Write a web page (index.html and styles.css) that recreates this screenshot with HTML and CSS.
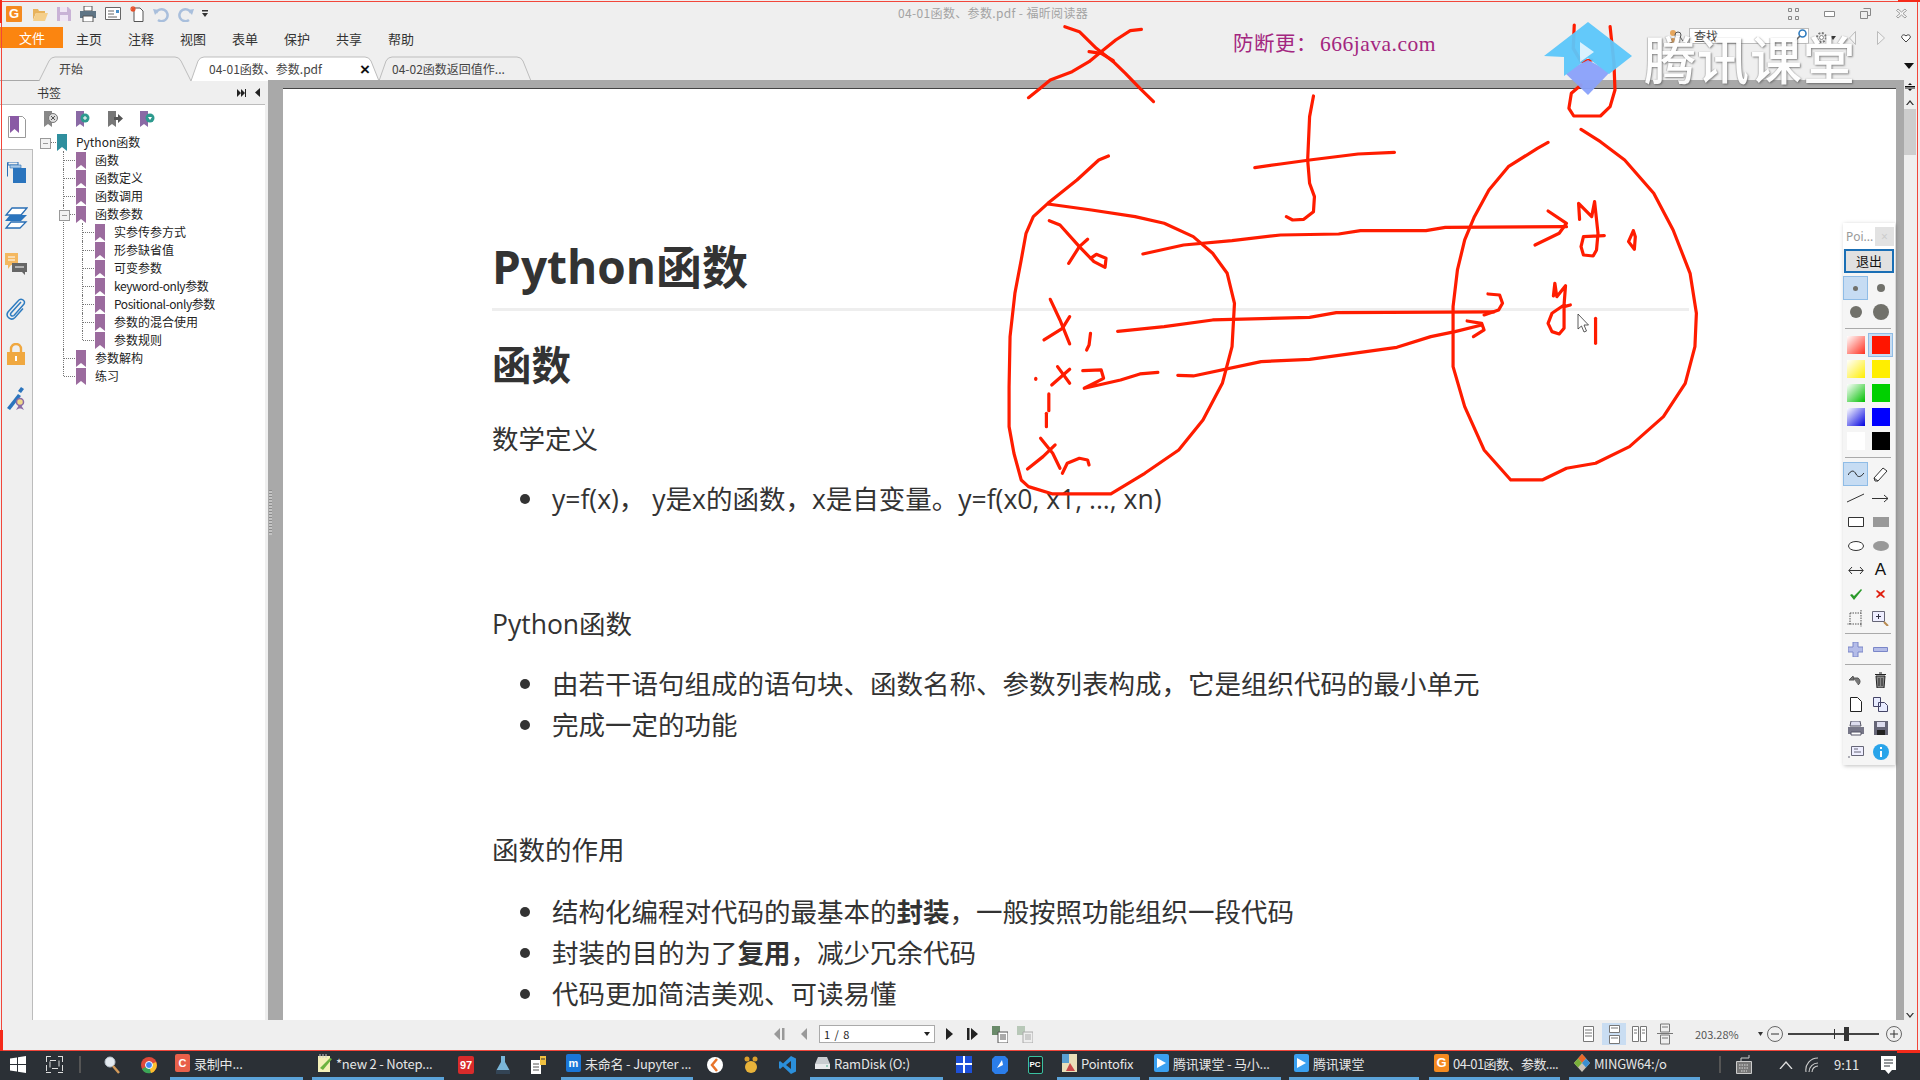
FILE: index.html
```html
<!DOCTYPE html>
<html lang="zh-CN">
<head>
<meta charset="utf-8">
<title>04-01函数、参数.pdf - 福昕阅读器</title>
<link rel="stylesheet" href="styles.css">
</head>
<body>
<svg class="defs" width="0" height="0" aria-hidden="true">
  <symbol id="bm" viewBox="0 0 10 17"><path d="M0 0H10V17L5 13 0 17Z"/></symbol>
</svg>

<div class="win">
  <header class="titlebar">
    <div class="qa">
      <span class="app-logo">G</span>
      <svg class="qi" width="16" height="14" viewBox="0 0 16 14"><path d="M1 2h5l1 2h6v2H4L1 13Z" fill="#e8b35c"/><path d="M4 6h12l-3 8H1Z" fill="#f5cf8a"/></svg>
      <svg class="qi" width="14" height="14" viewBox="0 0 14 14"><path d="M0 0h11l3 3v11H0Z" fill="#c9b3d6"/><path d="M3 0h7v5H3ZM3 8h8v6H3Z" fill="#efe6f4"/></svg>
      <svg class="qi" width="16" height="16" viewBox="0 0 16 16"><path d="M4 0h8v5H4Z" fill="#fff" stroke="#555"/><path d="M0 5h16v7H0Z" fill="#5f7585"/><path d="M3 10h10v6H3Z" fill="#fff" stroke="#555"/></svg>
      <svg class="qi" width="16" height="13" viewBox="0 0 16 13"><path d="M.5.5h15v12H.5Z" fill="#fff" stroke="#666"/><path d="M3 4h6M3 7h6M3 10h9" stroke="#666"/><path d="M11 3h3v3h-3Z" fill="#4a90c8"/></svg>
      <svg class="qi" width="14" height="16" viewBox="0 0 14 16"><path d="M4 2h6l3 3v10.500H4Z" fill="#fff" stroke="#555"/><path d="M3 0v6M0 3h6M1 1l4 4M5 1 1 5" stroke="#e8502a" stroke-width="1.200"/></svg>
      <svg class="qi" width="16" height="16" viewBox="0 0 16 16"><path d="M3 7a6 6 0 1 1 2 7" fill="none" stroke="#a9bfdc" stroke-width="2.500"/><path d="M0 3l6 1-4 5Z" fill="#a9bfdc"/></svg>
      <svg class="qi" width="16" height="16" viewBox="0 0 16 16"><path d="M13 7a6 6 0 1 0-2 7" fill="none" stroke="#a9bfdc" stroke-width="2.500"/><path d="M16 3l-6 1 4 5Z" fill="#a9bfdc"/></svg>
      <svg class="qi" width="6" height="7" viewBox="0 0 6 7"><path d="M0 0h6v1.500H0ZM0 3h6L3 7Z" fill="#333"/></svg>
    </div>
    <div class="doc-title">04-01函数、参数.pdf - 福昕阅读器</div>
    <div class="wc">
      <svg width="11" height="12" viewBox="0 0 11 12"><path d="M.5.500h3v3h-3ZM7.500.500h3v3h-3ZM.5 8.500h3v3h-3ZM7.500 8.500h3v3h-3Z" fill="none" stroke="#888"/></svg>
      <svg width="11" height="6" viewBox="0 0 11 6"><path d="M.5.500h10v5H.5Z" fill="#fff" stroke="#888"/></svg>
      <svg width="11" height="11" viewBox="0 0 11 11"><path d="M3.500.500h7v7h-3M.5 3.500h7v7h-7Z" fill="none" stroke="#888"/></svg>
      <svg width="11" height="11" viewBox="0 0 11 11"><path d="M2 1l3.500 3L9 1l1.500 1.500L7 5.500l3.500 3L9 10 5.500 7 2 10 .5 8.500 4 5.500.5 2.500Z" fill="#f5f5f5" stroke="#888" stroke-width=".8"/></svg>
    </div>
  </header>

  <nav class="menubar">
    <div class="file-btn">文件</div>
    <div class="menu-items">
      <span class="menu-item">主页</span><span class="menu-item">注释</span><span class="menu-item">视图</span><span class="menu-item">表单</span><span class="menu-item">保护</span><span class="menu-item">共享</span><span class="menu-item">帮助</span>
    </div>
    <div class="ribbon-right">
      <svg class="find-ic" width="16" height="15" viewBox="0 0 16 15"><circle cx="5" cy="4" r="3" fill="#e6a65c"/><path d="M1 15c0-4 2-6 4-6s3 1 4 3" fill="#d99a55"/><circle cx="10" cy="6" r="3" fill="none" stroke="#555"/><path d="M12 8l3 4" stroke="#555"/></svg>
      <div class="search"><span>查找</span><svg width="13" height="13" viewBox="0 0 13 13"><circle cx="8.500" cy="4.500" r="3.500" fill="none" stroke="#2f7cc0" stroke-width="1.600"/><path d="M6 7 1 12" stroke="#666" stroke-width="1.600"/></svg></div>
      <svg class="gear" width="13" height="13" viewBox="0 0 13 13"><circle cx="6.500" cy="6.500" r="4.500" fill="#eee" stroke="#777" stroke-width="2" stroke-dasharray="2 1.500"/><circle cx="6.500" cy="6.500" r="2" fill="#fff" stroke="#888"/></svg>
      <svg class="caret" width="6" height="4" viewBox="0 0 6 4"><path d="M0 0h6L3 4Z" fill="#333"/></svg>
      <svg class="nav-l" width="7" height="14" viewBox="0 0 7 14"><path d="M6.500.5v13L.5 7Z" fill="#f4f4f4" stroke="#bbb"/></svg>
      <svg class="nav-r" width="8" height="14" viewBox="0 0 8 14"><path d="M.5.5v13l7-6.500Z" fill="#f4f4f4" stroke="#bbb"/></svg>
      <svg class="heart" width="10" height="9" viewBox="0 0 10 9"><path d="M5 8 1 4C-.5 1.500 3 -.5 5 2c2-2.500 5.500-.5 4 2Z" fill="#fff" stroke="#444"/></svg>
    </div>
  </nav>

  <div class="tabs">
    <div class="tab tab-start">
      <svg class="tab-shape" width="155" height="25" viewBox="0 0 155 25"><path d="M1 25 11 5Q13 1 17 1H137Q141 1 143 5L153 25" fill="#efefef" stroke="#bdbdbd"/></svg>
      <span class="tab-label">开始</span>
    </div>
    <div class="tab tab-active">
      <svg class="tab-shape" width="191" height="25" viewBox="0 0 191 25"><path d="M1 25 8 5Q10 1 14 1H175Q179 1 181 5L189 25" fill="#fff" stroke="#bdbdbd"/></svg>
      <span class="tab-label">04-01函数、参数.pdf</span><span class="tab-x">×</span>
    </div>
    <div class="tab tab-next">
      <svg class="tab-shape" width="155" height="25" viewBox="0 0 155 25"><path d="M1 25 8 5Q10 1 14 1H139Q143 1 145 5L153 25" fill="#efefef" stroke="#bdbdbd"/></svg>
      <span class="tab-label">04-02函数返回值作...</span>
    </div>
    <svg class="ribbon-toggle" width="10" height="6" viewBox="0 0 10 6"><path d="M0 0h10L5 6Z" fill="#111"/></svg>
  </div>

  <main class="main">
    <aside class="side">
      <div class="side-head">
        <span class="side-title">书签</span>
        <svg width="10" height="8" viewBox="0 0 10 8"><path d="M0 0 4 4 0 8ZM4 0 8 4 4 8ZM8 0h1v8H8Z" fill="#222"/></svg>
        <svg class="side-collapse" width="6" height="9" viewBox="0 0 6 9"><path d="M5 0v9L0 4.500Z" fill="#222"/></svg>
      </div>
      <div class="side-body">
        <div class="rail">
          <div class="rail-cell active"><svg width="18" height="22" viewBox="0 0 18 22"><path d="M.5.5h14l3 3v18H.5Z" fill="#fff" stroke="#999"/><path d="M2 0h9v17l-4.500-4L2 17Z" fill="#8a5aa5"/></svg></div>
          <div class="rail-cell"><svg width="19" height="21" viewBox="0 0 19 21"><path d="M1 0h10v3H1ZM.5.5v14" stroke="#2a6fb5" fill="none"/><path d="M3 3h11v3H3Z" fill="#a9c9e8" stroke="#2a6fb5" stroke-width=".6"/><path d="M6 6h13v15H6Z" fill="#2a74bd"/></svg></div>
          <div class="rail-cell"><svg width="24" height="22" viewBox="0 0 24 22"><path d="M8 1h15l-6 7H2Z" fill="#fff" stroke="#2a6fb5" stroke-width="1.300"/><path d="M6 8h17l-6 6H1Z" fill="#2a74bd"/><path d="M7 15h15l-6 6H2Z" fill="#fff" stroke="#2a6fb5" stroke-width="1.300"/></svg></div>
          <div class="rail-cell"><svg width="22" height="22" viewBox="0 0 22 22"><path d="M0 0h13v12H6l-3 4v-4H0Z" fill="#f4b860"/><path d="M3 4h7M3 7h7" stroke="#fff"/><path d="M7 10h15v9h-2v3l-3-3H7Z" fill="#666"/><path d="M10 14h9" stroke="#fff"/></svg></div>
          <div class="rail-cell"><svg width="20" height="22" viewBox="0 0 20 22"><path d="M15 4 5 15c-1.500 2 1 4 3 2.500L18 6c2-3.500-3-6.500-6-3L2 14c-3 4.500 3 9.500 7 5.500l8-9" fill="none" stroke="#2f7cc0" stroke-width="1.500"/></svg></div>
          <div class="rail-cell"><svg width="18" height="22" viewBox="0 0 18 22"><path d="M4 10V6a5 5 0 0 1 10 0v4" fill="none" stroke="#f0a840" stroke-width="2.400"/><path d="M0 9h18v13H0Z" fill="#f0a840"/><path d="M8 13h2v5H8Z" fill="#fff"/></svg></div>
          <div class="rail-cell"><svg width="20" height="24" viewBox="0 0 20 24"><path d="M1 21 12 7l3 2L4 23Z" fill="#2a74bd"/><path d="M12 4 15 0l3 2-3 4Z" fill="#2a74bd"/><circle cx="14" cy="15" r="3.500" fill="#f0d78a" stroke="#8a6aa5" stroke-width="1.500"/><path d="M10 23l3-5h2l3 5-3-1.500h-2Z" fill="#8a6aa5"/></svg></div>
        </div>
        <div class="tree-pane">
          <div class="bm-tools">
            <svg width="15" height="16" viewBox="0 0 15 16"><path d="M0 0h8v16l-4-3-4 3Z" fill="#888"/><circle cx="9" cy="7" r="4.500" fill="#ddd" stroke="#777"/><path d="M7 5l4 4M11 5 7 9" stroke="#555"/></svg>
            <svg width="15" height="16" viewBox="0 0 15 16"><path d="M0 0h8v16l-4-3-4 3Z" fill="#8a6aa5"/><circle cx="9" cy="7" r="4.500" fill="#2d9a8e"/><path d="M7 7h4M9 5v4" stroke="#fff"/></svg>
            <svg width="15" height="16" viewBox="0 0 15 16"><path d="M0 0h8v16l-4-3-4 3Z" fill="#777"/><path d="M6 6h4V3l5 4.500-5 4.500V9H6Z" fill="#555"/></svg>
            <svg width="16" height="16" viewBox="0 0 16 16"><path d="M0 0h8v16l-4-3-4 3Z" fill="#8a6aa5"/><circle cx="10" cy="7" r="4.500" fill="#2d9a8e"/><path d="M8 6h4l-2 3Z" fill="#fff"/></svg>
          </div>
          <ul class="tree">
            <li class="root has-kids"><div class="node"><svg class="bm teal" width="10" height="17"><use href="#bm"/></svg>Python函数</div>
              <ul>
                <li><div class="node"><svg class="bm" width="10" height="17"><use href="#bm"/></svg>函数</div></li>
                <li><div class="node"><svg class="bm" width="10" height="17"><use href="#bm"/></svg>函数定义</div></li>
                <li><div class="node"><svg class="bm" width="10" height="17"><use href="#bm"/></svg>函数调用</div></li>
                <li class="has-kids"><div class="node"><svg class="bm" width="10" height="17"><use href="#bm"/></svg>函数参数</div>
                  <ul>
                    <li><div class="node"><svg class="bm" width="10" height="17"><use href="#bm"/></svg>实参传参方式</div></li>
                    <li><div class="node"><svg class="bm" width="10" height="17"><use href="#bm"/></svg>形参缺省值</div></li>
                    <li><div class="node"><svg class="bm" width="10" height="17"><use href="#bm"/></svg>可变参数</div></li>
                    <li><div class="node lat"><svg class="bm" width="10" height="17"><use href="#bm"/></svg><span>keyword-only参数</span></div></li>
                    <li><div class="node lat"><svg class="bm" width="10" height="17"><use href="#bm"/></svg><span>Positional-only参数</span></div></li>
                    <li><div class="node"><svg class="bm" width="10" height="17"><use href="#bm"/></svg>参数的混合使用</div></li>
                    <li><div class="node"><svg class="bm" width="10" height="17"><use href="#bm"/></svg>参数规则</div></li>
                  </ul>
                </li>
                <li><div class="node"><svg class="bm" width="10" height="17"><use href="#bm"/></svg>参数解构</div></li>
                <li><div class="node"><svg class="bm" width="10" height="17"><use href="#bm"/></svg>练习</div></li>
              </ul>
            </li>
          </ul>
        </div>
      </div>
    </aside>
    <div class="workspace">
      <i class="grip"></i>
      <article class="doc">
        <h1>Python函数</h1>
        <h2>函数</h2>
        <p class="p1">数学定义</p>
        <ul class="l1"><li>y=f(x)， y是x的函数，x是自变量。y=f(x0, x1, ..., xn)</li></ul>
        <p class="p2">Python函数</p>
        <ul class="l2"><li>由若干语句组成的语句块、函数名称、参数列表构成，它是组织代码的最小单元</li><li>完成一定的功能</li></ul>
        <p class="p2">函数的作用</p>
        <ul class="l3"><li>结构化编程对代码的最基本的<b>封装</b>，一般按照功能组织一段代码</li><li>封装的目的为了<b>复用</b>，减少冗余代码</li><li>代码更加简洁美观、可读易懂</li></ul>
      </article>
      <div class="vscroll">
        <svg class="split-ic" width="10" height="8" viewBox="0 0 10 8"><path d="M0 3.500h10M0 5h10" stroke="#111"/><path d="M3 2h4L5 0ZM3 6h4L5 8Z" fill="#111"/></svg>
        <svg class="up-ic" width="8" height="5" viewBox="0 0 8 5"><path d="M0 5 4 0l4 5-1.500 0L4 2 1.500 5Z" fill="#333"/></svg>
        <div class="thumb"></div>
        <svg class="down-ic" width="8" height="5" viewBox="0 0 8 5"><path d="M0 0l4 5 4-5H6.500L4 3 1.500 0Z" fill="#333"/></svg>
      </div>
    </div>
  </main>

  <footer class="status">
    <div class="pager">
      <svg width="11" height="12" viewBox="0 0 11 12"><path d="M6 0v12L0 6ZM8 0h2.500v12H8Z" fill="#999"/></svg>
      <svg class="gap-prev" width="6" height="12" viewBox="0 0 6 12"><path d="M6 0v12L0 6Z" fill="#999"/></svg>
      <div class="page-box"><span>1 / 8</span><svg width="6" height="4" viewBox="0 0 6 4"><path d="M0 0h6L3 4Z" fill="#222"/></svg></div>
      <svg class="gap-next" width="7" height="12" viewBox="0 0 7 12"><path d="M0 0v12l7-6Z" fill="#222"/></svg>
      <svg class="gap-last" width="11" height="12" viewBox="0 0 11 12"><path d="M0 0h2.500v12H0ZM4 0v12l7-6Z" fill="#222"/></svg>
      <svg class="gap-c1" width="16" height="17" viewBox="0 0 16 17"><path d="M0 0h8v9H0Z" fill="#6a8a6a"/><path d="M6 6h10v11H6Z" fill="#fff" stroke="#555"/><path d="M8 9h6M8 11h6M8 13h6" stroke="#555"/></svg>
      <svg class="gap-c2" width="16" height="17" viewBox="0 0 16 17"><path d="M0 0h8v9H0Z" fill="#b8c8b8"/><path d="M6 6h10v11H6Z" fill="#eee" stroke="#aaa"/><path d="M8 9h6M8 11h6M8 13h6" stroke="#aaa"/></svg>
    </div>
    <div class="views">
      <svg width="11" height="16" viewBox="0 0 11 16"><path d="M.5.5h10v15H.5ZM2 4h7M2 7h7M2 10h7" fill="#fff" stroke="#777"/></svg>
      <span class="view-sel"><svg width="11" height="22" viewBox="0 0 11 22"><path d="M.5 2.500h10v7H.5ZM.5 12.500h10v8H.5ZM2 5h7M2 15h7" fill="#fff" stroke="#777"/></svg></span>
      <svg class="v3" width="15" height="16" viewBox="0 0 15 16"><path d="M.5.5h6v15h-6ZM8.500.5h6v15h-6ZM2 4h3M2 7h3M10 4h3M10 7h3" fill="#fff" stroke="#777"/></svg>
      <svg class="v4" width="16" height="22" viewBox="0 0 16 22"><path d="M3.500 1h9v8h-9ZM0 10.500h16M3.500 12h9v9h-9ZM5 4h6M5 15h6" fill="none" stroke="#777"/></svg>
      <span class="zoom-val">203.28%</span>
      <svg class="zoom-caret" width="5" height="4" viewBox="0 0 5 4"><path d="M0 0h5L2.500 4Z" fill="#333"/></svg>
      <svg class="zoom-btn" width="16" height="16" viewBox="0 0 16 16"><circle cx="8" cy="8" r="7.500" fill="none" stroke="#666"/><path d="M4 8h8" stroke="#333"/></svg>
      <div class="slider"><i class="tick"></i><i class="knob"></i></div>
      <svg class="zoom-btn2" width="16" height="16" viewBox="0 0 16 16"><circle cx="8" cy="8" r="7.500" fill="none" stroke="#666"/><path d="M4 8h8M8 4v8" stroke="#333"/></svg>
    </div>
  </footer>
</div>

<div class="taskbar">
  <div class="ti w36"><svg width="16" height="17" viewBox="0 0 16 17"><path d="M0 2.500 7 1.500v6.500H0ZM8 1.300 16 0v8H8ZM0 9h7v6.500L0 14.500ZM8 9h8v8L8 15.700Z" fill="#fff"/></svg></div>
  <div class="ti w37"><svg width="17" height="17" viewBox="0 0 17 17"><path d="M0 .5h5M12 .5h5M4 4.500h9v8H4ZM0 16.500h5M12 16.500h5M16.500 0v17M.5 0v17" fill="none" stroke="#ddd" stroke-dasharray="6 3"/></svg></div>
  <div class="ti w14"><i class="tsep"></i></div>
  <div class="ti w50"><svg width="16" height="18" viewBox="0 0 16 18"><circle cx="6" cy="6" r="5" fill="#e4eaf0" stroke="#b9c2cc"/><path d="M9 10l6 7" stroke="#d39a5a" stroke-width="2.500"/></svg></div>
  <div class="ti w23"><svg width="16" height="18" viewBox="0 0 16 18"><circle cx="8" cy="9" r="8" fill="#de4a3a"/><path d="M8 9 1 13A8 8 0 0 0 10 17Z" fill="#3aa757"/><path d="M8 9l7-3a8 8 0 0 1-5 11Z" fill="#fbc02d"/><circle cx="8" cy="9" r="3.500" fill="#4285f4" stroke="#fff"/></svg></div>

  <div class="tapp m10 w133"><span class="tlogo t-rec">C</span><span class="tlabel">录制中...</span></div>
  <div class="tapp m9 w132"><svg width="15" height="18" viewBox="0 0 15 18"><path d="M1 2h12v16H1Z" fill="#f4f0b8"/><path d="M3 0v4M6 0v4M9 0v4" stroke="#ccc"/><path d="M3 14 13 4l2 1L6 16Z" fill="#6db33f"/></svg><span class="tlabel">*new 2 - Notep...</span></div>
  <div class="ti m4 w36"><span class="tlogo t-97">97</span></div>
  <div class="ti w37"><svg width="16" height="18" viewBox="0 0 16 18"><path d="M6 0h4v6l5 9v3H1v-3l5-9Z" fill="#7ab6d9"/><path d="M1 14h14v4H1Z" fill="#345"/></svg></div>
  <div class="ti w34"><svg width="16" height="18" viewBox="0 0 16 18"><path d="M1 4h10v14H1Z" fill="#fff"/><path d="M3 8h6M3 11h6M3 14h6" stroke="#555"/><path d="M10 0h6v9h-6Z" fill="#f0c040"/><path d="M11 3h4" stroke="#333"/></svg></div>
  <div class="tapp m6 w132"><span class="tlogo t-jup">m</span><span class="tlabel">未命名 - Jupyter ...</span></div>
  <div class="ti m4 w36"><svg width="16" height="18" viewBox="0 0 16 18"><circle cx="8" cy="9" r="8" fill="#fff"/><path d="M10 3 5 9l5 6" fill="none" stroke="#e8742a" stroke-width="2.500"/></svg></div>
  <div class="ti w36"><svg width="16" height="17" viewBox="0 0 16 17"><circle cx="8" cy="11" r="6" fill="#e8b33a"/><circle cx="4" cy="3" r="2.500" fill="#d9a02e"/><circle cx="12" cy="3" r="2.500" fill="#d9a02e"/></svg></div>
  <div class="ti w36"><svg width="17" height="18" viewBox="0 0 17 18"><path d="M12 0l5 2.500v13L12 18 4 10.500 1 13l-1-1v-6l1-1 3 2.500Z" fill="#2b8fdb"/><path d="M12 5v8L7 9Z" fill="#2b3036"/></svg></div>
  <div class="tapp m5 w133"><svg width="15" height="12" viewBox="0 0 15 12"><path d="M3 0h9l3 7H0Z" fill="#c8ccd0"/><path d="M0 7h15v5H0Z" fill="#e8eaec"/><path d="M11 9h2" stroke="#4a8"/></svg><span class="tlabel">RamDisk (O:)</span></div>
  <div class="ti m3 w36"><svg width="16" height="17" viewBox="0 0 16 17"><path d="M0 0h16v17H0Z" fill="#1e50d8"/><path d="M7 0h2v17H7ZM0 7h16v2H0Z" fill="#fff"/></svg></div>
  <div class="ti w36"><svg width="16" height="18" viewBox="0 0 16 18"><path d="M3 0h10l3 3v12l-3 3H3l-3-3V3Z" fill="#2b7de9"/><path d="M5 12 10 4l1 5Z" fill="#fff"/></svg></div>
  <div class="ti w34"><span class="tlogo t-pc">PC</span></div>
  <div class="tapp m5 w83"><svg width="15" height="18" viewBox="0 0 15 18"><path d="M0 0h15v18H0Z" fill="#e9dfb8"/><path d="M0 0h7v9H0Z" fill="#5aa0d0"/><path d="M8 9l5 8H4Z" fill="#c94a4a"/></svg><span class="tlabel">Pointofix</span></div>
  <div class="tapp m9 w132"><span class="tlogo t-ke"><svg width="9" height="10" viewBox="0 0 9 10"><path d="M0 0l9 5-9 5Z" fill="#fff"/></svg></span><span class="tlabel">腾讯课堂 - 马小...</span></div>
  <div class="tapp m8 w130"><span class="tlogo t-ke"><svg width="9" height="10" viewBox="0 0 9 10"><path d="M0 0l9 5-9 5Z" fill="#fff"/></svg></span><span class="tlabel">腾讯课堂</span></div>
  <div class="tapp m10 w131"><span class="tlogo t-fox">G</span><span class="tlabel tight">04-01函数、参数....</span></div>
  <div class="tapp m9 w131"><svg width="16" height="18" viewBox="0 0 16 18"><path d="M8 0l8 9-8 9-8-9Z" fill="#c9c2b6"/><path d="M8 0l4 4.500-4 4.500-4-4.500Z" fill="#e8682a"/><path d="M12 4.500l4 4.500-4 4.500-4-4.500Z" fill="#3a8fd0"/><path d="M4 4.500l4 4.500-4 4.500-4-4.500Z" fill="#7ab03a"/></svg><span class="tlabel">MINGW64:/o</span></div>

  <div class="tray">
    <i class="tsep"></i>
    <svg class="tr-kb" width="16" height="19" viewBox="0 0 16 19"><path d="M.5 6.500h15v12H.5Z" fill="#777" stroke="#ccc"/><path d="M3 10h10M3 13h10M5 16h6" stroke="#ddd" stroke-dasharray="1.500 1"/><path d="M5 6V3h8V0" fill="none" stroke="#ccc"/></svg>
    <svg class="tr-up" width="14" height="8" viewBox="0 0 14 8"><path d="M1 8l6-7 6 7" fill="none" stroke="#ddd" stroke-width="1.300"/></svg>
    <svg class="tr-wifi" width="13" height="15" viewBox="0 0 13 15"><path d="M1 15A12 12 0 0 1 13 1M4 15a9 9 0 0 1 9-9M7 15a6 6 0 0 1 6-6" fill="none" stroke="#ccc" stroke-width="1.100"/></svg>
    <span class="clock">9:11</span>
    <svg class="tr-note" width="15" height="18" viewBox="0 0 15 18"><path d="M0 0h15v14h-4l-3.500 4L4 14H0Z" fill="#fff"/><path d="M3 4h9M3 7h9M3 10h6" stroke="#2b3036"/></svg>
  </div>
</div>

<svg class="ink" width="1920" height="1080" viewBox="0 0 1920 1080" aria-hidden="true">
  <g transform="translate(980,20) scale(.4847,.3333)" fill="none" stroke="#ff1c00" stroke-width="3.200" stroke-linejoin="round" stroke-linecap="round">
    <path vector-effect="non-scaling-stroke" d="M175 20 205 35 240 85 275 125 300 160 330 205 358 245"/>
    <path vector-effect="non-scaling-stroke" d="M333 28 310 32 280 60 250 95 225 125 190 155 145 180 120 210 100 233"/>
    <path vector-effect="non-scaling-stroke" d="M225 95 250 100 275 122"/>
    <path vector-effect="non-scaling-stroke" d="M688 228 680 290 676 420 680 490 690 530 688 575 668 598 645 600 632 590"/>
    <path vector-effect="non-scaling-stroke" d="M567 443 620 432 680 420 780 402 855 397"/>
    <path vector-effect="non-scaling-stroke" d="M265 408 245 420 200 480 140 550 110 590 95 640 85 720 72 820 62 950 60 1100 60 1220 70 1300 85 1380 100 1400 150 1422 270 1422 340 1360 410 1290 460 1200 500 1090 520 980 525 850 510 760 480 700 440 650 380 610 320 590 230 570 140 552"/>
    <path vector-effect="non-scaling-stroke" d="M1172 367 1150 385 1090 440 1050 510 1020 590 1000 660 985 750 976 860 976 1040 1000 1160 1040 1290 1095 1380 1160 1380 1210 1345 1270 1330 1340 1280 1410 1190 1455 1090 1475 980 1478 880 1465 760 1430 630 1390 520 1330 420 1280 365 1240 328"/>
    <path vector-effect="non-scaling-stroke" d="M336 702 420 675 520 662 620 645 740 642 785 632 920 632 960 622 1210 620"/>
    <path vector-effect="non-scaling-stroke" d="M1172 573 1210 610 1195 640 1145 675"/>
    <path vector-effect="non-scaling-stroke" d="M1237 598 1235 550 1262 590 1268 545 1275 640 1272 690 1265 708 1245 705 1240 680 1245 650 1288 647"/>
    <path vector-effect="non-scaling-stroke" d="M1348 632 1338 665 1350 688 1352 650Z"/>
    <path vector-effect="non-scaling-stroke" d="M284 934 380 920 480 900 680 892 735 878 1060 876"/>
    <path vector-effect="non-scaling-stroke" d="M1048 822 1072 825 1078 850 1070 870 1040 885"/>
    <path vector-effect="non-scaling-stroke" d="M1183 828 1186 790 1190 830 1208 797 1205 855 1180 880 1172 910 1180 935 1195 942 1205 925 1205 860 1218 855"/>
    <path vector-effect="non-scaling-stroke" d="M1270 895V970"/>
    <path vector-effect="non-scaling-stroke" d="M408 1066 440 1068 580 1025 680 1018 860 982 930 950 980 935 1035 915"/>
    <path vector-effect="non-scaling-stroke" d="M1005 903 1035 910 1040 930 1018 950"/>
    <path vector-effect="non-scaling-stroke" d="M143 602 165 615 205 680 235 725 258 742 260 715 240 703 228 715"/>
    <path vector-effect="non-scaling-stroke" d="M222 658 205 680 183 730"/>
    <path vector-effect="non-scaling-stroke" d="M145 838 165 900 185 972"/>
    <path vector-effect="non-scaling-stroke" d="M185 890 170 925 132 960"/>
    <path vector-effect="non-scaling-stroke" d="M228 940 225 975 220 990"/>
    <path vector-effect="non-scaling-stroke" d="M160 1040 185 1090"/>
    <path vector-effect="non-scaling-stroke" d="M185 1048 148 1095"/>
    <path vector-effect="non-scaling-stroke" d="M212 1052 250 1050 255 1075 215 1105 290 1080 330 1062 367 1057"/>
    <path vector-effect="non-scaling-stroke" d="M115 1075V1078"/>
    <path vector-effect="non-scaling-stroke" d="M142 1122V1172"/>
    <path vector-effect="non-scaling-stroke" d="M137 1180V1220"/>
    <path vector-effect="non-scaling-stroke" d="M125 1255 150 1300 165 1345"/>
    <path vector-effect="non-scaling-stroke" d="M155 1275 130 1310 98 1347"/>
    <path vector-effect="non-scaling-stroke" d="M170 1360 180 1330 205 1315 222 1320 225 1335"/>
    <path vector-effect="non-scaling-stroke" d="M1226 15 1224 85 1240 125 1262 120"/>
    <path vector-effect="non-scaling-stroke" d="M1300 20 1308 130 1310 210 1300 260 1280 288 1225 288 1215 265 1220 220 1240 195"/>
  </g>
  <path d="M1578 314v15l3.500-3 2.500 6 2.500-1-2.500-6h4.500Z" fill="#fff" stroke="#333" stroke-width=".8"/>
</svg>

<div class="mark">防断更：<span>666java.com</span></div>
<div class="ke-mark">
  <svg width="90" height="74" viewBox="0 0 90 74"><path d="M20 50 44 38 66 50 44 73Z" fill="#8aa2fb"/><path d="M44 0 88 34 65 52 44 36 20 54V35L0 34Z" fill="#5cc7fb"/><path d="M36 20v20l14-10Z" fill="#d8f2ff"/></svg>
  <span>腾讯课堂</span>
</div>

<aside class="pf">
  <div class="pf-head"><span>Poi...</span><i>×</i></div>
  <div class="pf-exit">退出</div>
  <div class="pf-grid">
    <span class="pc sel"><i class="dot d1"></i></span><span class="pc"><i class="dot d2"></i></span>
    <span class="pc"><i class="dot d3"></i></span><span class="pc"><i class="dot d4"></i></span>
    <hr>
    <span class="pc"><i class="sw red-g"></i></span><span class="pc sel"><i class="sw red"></i></span>
    <span class="pc"><i class="sw yel-g"></i></span><span class="pc"><i class="sw yel"></i></span>
    <span class="pc"><i class="sw grn-g"></i></span><span class="pc"><i class="sw grn"></i></span>
    <span class="pc"><i class="sw blu-g"></i></span><span class="pc"><i class="sw blu"></i></span>
    <span class="pc"><i class="sw wht"></i></span><span class="pc"><i class="sw blk"></i></span>
    <hr>
    <span class="pc sel"><svg width="16" height="8" viewBox="0 0 16 8"><path d="M0 5C3 0 6 0 8 4s5 3 8-1" fill="none" stroke="#222"/></svg></span>
    <span class="pc"><svg width="15" height="15" viewBox="0 0 15 15"><path d="M1 11 10 1l4 3-9 10H2Z" fill="#fff" stroke="#333"/><path d="M1 11l4 3" stroke="#333"/></svg></span>
    <span class="pc"><svg width="17" height="10" viewBox="0 0 17 10"><path d="M0 9 17 1" stroke="#333"/></svg></span>
    <span class="pc"><svg width="17" height="9" viewBox="0 0 17 9"><path d="M0 4.500h16M12 1l4 3.500L12 8" fill="none" stroke="#333"/></svg></span>
    <span class="pc"><svg width="16" height="10" viewBox="0 0 16 10"><path d="M.5.500h15v9H.5Z" fill="#fff" stroke="#333"/></svg></span>
    <span class="pc"><svg width="16" height="10" viewBox="0 0 16 10"><path d="M0 0h16v10H0Z" fill="#999"/></svg></span>
    <span class="pc"><svg width="16" height="10" viewBox="0 0 16 10"><ellipse cx="8" cy="5" rx="7.500" ry="4.500" fill="#fff" stroke="#333"/></svg></span>
    <span class="pc"><svg width="16" height="10" viewBox="0 0 16 10"><ellipse cx="8" cy="5" rx="8" ry="5" fill="#999"/></svg></span>
    <span class="pc"><svg width="16" height="9" viewBox="0 0 16 9"><path d="M1 4.500h14M4 1 .8 4.500 4 8M12 1l3.200 3.500L12 8" fill="none" stroke="#333"/></svg></span>
    <span class="pc pf-a">A</span>
    <span class="pc"><svg width="12" height="11" viewBox="0 0 12 11"><path d="M0 6l4 5 8-10-1-1-7 7-2-2Z" fill="#2a9a2a"/></svg></span>
    <span class="pc"><svg width="9" height="8" viewBox="0 0 9 8"><path d="M0 1l1-1 3.500 2.500L8 0l1 1-3 3 3 3-1 1-3.500-2.500L1 8 0 7l3-3Z" fill="#e02010"/></svg></span>
    <span class="pc"><svg width="17" height="17" viewBox="0 0 17 17"><path d="M3 14H0M3 14h11M14 14v3M14 14V0M3 3v11M3 3h11" fill="none" stroke="#555" stroke-dasharray="1.500 1"/></svg></span>
    <span class="pc"><svg width="17" height="15" viewBox="0 0 17 15"><path d="M.5.500h12v10H.5Z" fill="#eef" stroke="#667"/><path d="M4 5.500h5M6.500 3v5" stroke="#334"/><path d="M12 11l4 4" stroke="#b88a50" stroke-width="2"/></svg></span>
    <hr class="hr-tight">
    <span class="pc"><svg width="15" height="15" viewBox="0 0 15 15"><path d="M5 0h5v5h5v5h-5v5H5v-5H0V5h5Z" fill="#b4bce8" stroke="#7a86c8"/></svg></span>
    <span class="pc"><svg width="15" height="5" viewBox="0 0 15 5"><path d="M.5.500h14v4H.5Z" fill="#b4bce8" stroke="#7a86c8"/></svg></span>
    <hr class="hr-tight">
    <span class="pc"><svg width="14" height="10" viewBox="0 0 14 10"><path d="M5 5H0l4-4 1 4ZM4 3h5a4 4 0 0 1 0 7" fill="#777" stroke="#555"/></svg></span>
    <span class="pc"><svg width="13" height="16" viewBox="0 0 13 16"><path d="M2 4h9l-1 12H3Z" fill="#888" stroke="#222"/><path d="M1 2.500h11M5 1h3M5 6v8M8 6v8" stroke="#222"/></svg></span>
    <span class="pc"><svg width="12" height="15" viewBox="0 0 12 15"><path d="M.5.500h7l4 4v10H.5Z" fill="#fff" stroke="#222"/></svg></span>
    <span class="pc"><svg width="15" height="15" viewBox="0 0 15 15"><path d="M.5.500h7v9h-7ZM5.500 5.500h6l3 3v6h-9Z" fill="#e8ecff" stroke="#446"/></svg></span>
    <span class="pc"><svg width="16" height="15" viewBox="0 0 16 15"><path d="M3 0h9l1 5H2Z" fill="#dde" stroke="#556"/><path d="M0 6h16v7H0Z" fill="#778" /><path d="M3 11h10v3H3Z" fill="#fff" stroke="#556"/></svg></span>
    <span class="pc"><svg width="14" height="14" viewBox="0 0 14 14"><path d="M0 0h14v14H0Z" fill="#667"/><path d="M3 1h8v5H3Z" fill="#dde"/><path d="M3 9h8v5H3Z" fill="#222"/></svg></span>
    <span class="pc"><svg width="16" height="12" viewBox="0 0 16 12"><path d="M3.500.5h12v9h-12Z" fill="#eef" stroke="#667"/><path d="M6 3h4M6 6h7M0 11h2" stroke="#667"/></svg></span>
    <span class="pc"><svg width="16" height="16" viewBox="0 0 16 16"><circle cx="8" cy="8" r="8" fill="#29a4ea"/><path d="M7 7h2v6H7ZM7 3h2v2H7Z" fill="#fff"/></svg></span>
  </div>
</aside>

<div class="frame"></div>
<div class="cn cn-tl"></div>
<div class="cn cn-tr"></div>
<div class="cn cn-bl"></div>
<div class="cn cn-br"></div>
</body>
</html>
```

FILE: styles.css
```css
* { box-sizing: border-box; }
html, body { margin: 0; padding: 0; width: 1920px; height: 1080px; overflow: hidden; }
body {
  font-family: "Noto Sans CJK SC", "Noto Sans", sans-serif;
  background: #efefef;
  position: relative;
  color: #222;
}
i { font-style: normal; display: block; }
svg { display: block; flex: none; }
.defs { position: absolute; }

/* window */
.win { height: 1051px; display: flex; flex-direction: column; background: #efefef; }
.titlebar { height: 27px; flex: none; display: flex; align-items: center; position: relative; }
.qa { display: flex; align-items: center; padding-left: 6px; }
.app-logo {
  width: 16px; height: 16px; background: #f58a1f; color: #fff; font: 700 13px/16px "Liberation Sans", sans-serif;
  text-align: center; border-radius: 1px;
}
.qi { margin-left: 9px; }
.qa .qi:nth-child(2) { margin-left: 10px; }
.qa .qi:nth-child(9) { margin-left: 8px; }
.doc-title { margin-left: 690px; margin-bottom: 3px; font-size: 12px; letter-spacing: .35px; color: #a3a3a3; white-space: nowrap; }
.wc { margin-left: auto; display: flex; align-items: center; gap: 25px; padding-right: 13px; }

.menubar { height: 21px; flex: none; display: flex; }
.file-btn {
  width: 63px; background: #fb8510; color: #fff; font-size: 13px; line-height: 22px; padding-left: 19px;
}
.menu-items { display: flex; padding-left: 13px; font-size: 13px; line-height: 24px; color: #333; }
.menu-item { width: 52px; }
.ribbon-right { margin-left: auto; display: flex; align-items: flex-start; padding-right: 9px; position: relative; }
.find-ic { margin: 2px 5px 0 0; }
.search {
  width: 120px; height: 16px; margin-top: 1px; background: #fff; border: 1px solid #bbb; font-size: 12px; line-height: 14px;
  display: flex; justify-content: space-between; padding: 0 1px 0 4px; color: #444;
}
.gear { margin: 4px 0 0 6px; }
.caret { margin: 9px 0 0 2px; }
.nav-l { margin: 4px 0 0 13px; }
.nav-r { margin: 4px 0 0 21px; }
.heart { margin: 7px 0 0 16px; }

.tabs { height: 32px; flex: none; display: flex; align-items: flex-end; padding-left: 38px; position: relative; }
.tab { height: 24px; position: relative; font-size: 12px; color: #444; white-space: nowrap; flex: none; }
.tab-shape { position: absolute; left: 0; bottom: -1px; }
.tab-label { position: relative; top: 1px; line-height: 24px; }
.tab-start { width: 152px; padding-left: 21px; }
.tab-active { width: 188px; padding-left: 19px; }
.tab-next { width: 155px; padding-left: 14px; }
.tab-x { position: absolute; left: 170px; top: 2px; font: 700 17px/24px "Liberation Sans", sans-serif; color: #111; }
.ribbon-toggle { position: absolute; right: 6px; top: 15px; }

/* main */
.main { flex: 1; min-height: 0; display: flex; }
.side { width: 268px; flex: none; display: flex; flex-direction: column; background: #fff; border-top: 1px solid #a8a8a8; border-right: 3px solid #efefef; }
.side-head {
  height: 24px; flex: none; display: flex; align-items: center; background: #efefef; border-bottom: 1px solid #bcbcbc;
  padding-left: 37px; font-size: 12px; color: #333;
}
.side-title { width: 200px; }
.side-head svg:nth-of-type(1) { margin-right: 8px; }
.side-body { flex: 1; min-height: 0; display: flex; }
.rail { width: 33px; flex: none; background: #efefef; border-right: 1px solid #bcbcbc; }
.rail-cell { height: 45.300px; display: flex; align-items: center; justify-content: center; }
.rail-cell.active { background: #fff; width: 33px; margin-right: -1px; border-bottom: 1px solid #bcbcbc; }
.tree-pane { flex: 1; min-width: 0; }
.bm-tools { height: 28px; display: flex; align-items: center; gap: 17px; padding: 0 0 0 11px; }
.tree, .tree ul { list-style: none; margin: 0; padding: 0; font-size: 12px; color: #222; }
.tree { padding-left: 24px; }
.tree ul { padding-left: 19px; }
.tree li { position: relative; }
.node { height: 18px; display: flex; align-items: center; gap: 9px; white-space: nowrap; line-height: 18px; }
.lat span { letter-spacing: -.45px; }
.bm { fill: #9b6b9e; }
.bm.teal { fill: #2f8f9e; }
.tree ul > li::before { content: ""; position: absolute; left: -13px; top: 0; bottom: 0; border-left: 1px dotted #777; }
.tree ul > li:last-child::before { bottom: auto; height: 9px; }
.tree ul > li::after { content: ""; position: absolute; left: -12px; top: 9px; width: 11px; border-top: 1px dotted #777; }
.has-kids > .node::before {
  content: ""; position: absolute; z-index: 1; left: -17px; top: 5px; width: 9px; height: 9px;
  background: linear-gradient(#999, #999) center/5px 1px no-repeat #f2f2f2; border: 1px solid #999;
}
.root > .node::after { content: ""; position: absolute; left: -7px; top: 9px; width: 6px; border-top: 1px dotted #777; }

.workspace { flex: 1; min-width: 0; display: flex; background: #a9a9a9; padding-left: 15px; position: relative; }
.grip { position: absolute; left: 1px; top: 410px; width: 3px; height: 45px; background: repeating-linear-gradient(#8c8c8c 0 1px, #c4c4c4 1px 3px); }
.doc {
  width: 1613px; margin-top: 8px; background: #fff; border-top: 1px solid #444; overflow: hidden; padding: 147px 207px 0 209px;
  color: #333; font-family: "Open Sans", "Noto Sans CJK SC", sans-serif;
}
.doc h1 { margin: 0; font-size: 46px; line-height: 60px; font-weight: 700; padding-bottom: 12px; border-bottom: 3px solid #eee; }
.doc h2 { margin: 29px 0 0; font-size: 39.500px; line-height: 50px; font-weight: 700; }
.doc p { margin: 0; font-size: 26.500px; line-height: 40px; }
.doc .p1 { margin-top: 29px; }
.doc .p2 { margin-top: 84px; }
.doc ul { margin: 0; padding-left: 60px; font-size: 26.500px; line-height: 41px; list-style: none; }
.doc li { position: relative; }
.doc li::before { content: ""; position: absolute; left: -32px; top: 15px; width: 10px; height: 10px; border-radius: 50%; background: #333; }
.doc .l1 { margin-top: 20px; }
.doc .l2 { margin-top: 20px; }
.doc .l3 { margin-top: 22px; }
.doc b { font-weight: 700; }

.vscroll { width: 24px; flex: none; padding: 0 4px 0 8px; display: flex; flex-direction: column; align-items: center; background: linear-gradient(90deg, #a9a9a9 8px, #efefef 8px); }
.split-ic { margin-top: 3px; }
.up-ic { margin-top: 9px; }
.thumb { width: 100%; height: 46px; margin-top: 4px; background: #cdcdcd; }
.down-ic { margin-top: auto; margin-bottom: 2px; }

.status { height: 31px; flex: none; display: flex; align-items: center; position: relative; padding: 0 0 3px 774px; }
.pager { display: flex; align-items: center; }
.gap-prev { margin-left: 16px; }
.page-box {
  width: 116px; height: 18px; margin-left: 12px; background: #fff; border: 1px solid #aaa; font-size: 11px; line-height: 16px;
  padding: 0 4px; display: flex; justify-content: space-between; align-items: center; letter-spacing: 1px;
}
.gap-next { margin-left: 11px; }
.gap-last { margin-left: 14px; }
.gap-c1 { margin-left: 14px; }
.gap-c2 { margin-left: 9px; }
.views { margin-left: 550px; display: flex; align-items: center; }
.view-sel { width: 24px; height: 22px; margin-left: 8px; background: #c9ddf2; display: flex; justify-content: center; }
.v3 { margin-left: 6px; }
.v4 { margin-left: 10px; }
.zoom-val { margin-left: 22px; width: 63px; font-size: 11px; color: #555; }
.zoom-btn { margin-left: 4px; }
.slider { width: 91px; height: 2px; margin-left: 5px; background: #444; position: relative; }
.tick { position: absolute; left: 46px; top: -4px; width: 1px; height: 10px; background: #333; }
.knob { position: absolute; left: 56px; top: -6px; width: 5px; height: 14px; background: #333; }
.zoom-btn2 { margin-left: 7px; }

/* taskbar */
.taskbar { height: 29px; display: flex; align-items: stretch; background: #2b3036; color: #e6e6e6; font-size: 13px; }
.ti { display: flex; align-items: center; justify-content: center; flex: none; padding-bottom: 2px; }
.tapp { display: flex; align-items: center; flex: none; padding: 0 0 2px 5px; gap: 4px; border-bottom: 3px solid #5ba3d9; white-space: nowrap; overflow: hidden; }
.w14 { width: 14px; } .w23 { width: 23px; } .w34 { width: 34px; } .w36 { width: 36px; } .w37 { width: 37px; } .w50 { width: 50px; }
.w83 { width: 83px; } .w130 { width: 130px; } .w131 { width: 131px; } .w132 { width: 132px; } .w133 { width: 133px; }
.m3 { margin-left: 3px; } .m4 { margin-left: 4px; } .m5 { margin-left: 5px; } .m6 { margin-left: 6px; } .m8 { margin-left: 8px; } .m9 { margin-left: 9px; } .m10 { margin-left: 10px; }
.tsep { width: 2px; height: 17px; background: #555; }
.tlogo {
  width: 15px; height: 18px; flex: none; display: flex; align-items: center; justify-content: center;
  font: 700 11px/18px "Liberation Sans", sans-serif; color: #fff; border-radius: 2px;
}
.t-rec { background: #e8604a; }
.t-97 { background: #d92b2b; width: 16px; }
.t-jup { background: #1a76d8; }
.t-pc { background: #1a1d20; border: 1px solid #3ac0a0; font-size: 8px; }
.t-ke { background: #3aa0f0; }
.t-fox { background: #f58a1f; font-size: 13px; }
.tlabel { letter-spacing: -.2px; }
.tlabel.tight { letter-spacing: -.55px; }
.tray { margin-left: 19px; display: flex; align-items: center; padding-bottom: 2px; }
.tr-kb { margin-left: 15px; }
.tr-up { margin-left: 27px; }
.tr-wifi { margin-left: 12px; }
.clock { margin-left: 16px; width: 21px; font-size: 13px; }
.tr-note { margin-left: 26px; }

/* overlays */
.ink { position: absolute; left: 0; top: 0; pointer-events: none; }
.mark { position: absolute; left: 1233px; top: 29px; font: 20.500px/30px "Liberation Serif", "Noto Sans CJK SC", serif; letter-spacing: .5px; color: #a3267f; white-space: nowrap; }
.mark span { font-size: 21.500px; margin-left: 3px; }
.ke-mark { position: absolute; left: 1544px; top: 22px; display: flex; opacity: .95; }
.ke-mark span {
  margin: 8px 0 0 10px; font-size: 52px; font-weight: 500; line-height: 56px; color: #fff; white-space: nowrap; letter-spacing: 1px;
  text-shadow: 1px 1px 2px rgba(90, 90, 90, .75), -1px 0 1px rgba(140, 140, 140, .45);
}

.pf { position: absolute; left: 1843px; top: 223px; width: 52px; height: 542px; background: #f5f5f5; box-shadow: 1px 1px 4px rgba(0, 0, 0, .25); }
.pf-head { height: 26px; display: flex; align-items: center; justify-content: space-between; padding: 0 1px 0 3px; background: #fff; font: 12px "Noto Sans", sans-serif; color: #999; }
.pf-head i { width: 19px; height: 19px; background: #e2e2e2; text-align: center; line-height: 19px; color: #ccc; }
.pf-exit { height: 24px; margin: 0 1px; background: #e1e1e1; border: 2px solid #1a6fb5; font-size: 13px; line-height: 20px; text-align: center; color: #111; }
.pf-grid { display: grid; grid-template-columns: 25px 25px; margin: 3px 0 0 0; justify-content: start; }
.pc { height: 24px; display: flex; align-items: center; justify-content: center; border: 1px solid transparent; }
.pc.sel { background: #c6dcf3; border-color: #8fbce6; }
.pf-grid hr { grid-column: 1 / -1; width: 46px; height: 1px; margin: 4px auto; border: 0; background: #aaa; }
.pf-grid hr.hr-tight { margin: 3px auto; }
.dot { border-radius: 50%; background: #71716b; }
.d1 { width: 5px; height: 5px; } .d2 { width: 8px; height: 8px; } .d3 { width: 12px; height: 12px; } .d4 { width: 16px; height: 16px; }
.sw { width: 18px; height: 18px; }
.red { background: #ff1500; } .yel { background: #ffee00; } .grn { background: #00d000; } .blu { background: #0000ff; } .blk { background: #000; } .wht { background: #fff; }
.red-g { background: linear-gradient(135deg, #fff, #ff3020); }
.yel-g { background: linear-gradient(135deg, #fff, #ffee00); }
.grn-g { background: linear-gradient(135deg, #fff, #00c000); }
.blu-g { background: linear-gradient(135deg, #fff, #0000e0); }
.pf-a { font: 17px "Liberation Sans", sans-serif; color: #111; }

.frame { position: absolute; left: 1px; top: 1px; width: 1917px; height: 1050px; border: 1px solid #f2463a; pointer-events: none; }
.cn { position: absolute; background: #f52a1a; }
.cn-tl { left: 0; top: 0; width: 2px; height: 23px; }
.cn-tr { right: 0; top: 0; width: 22px; height: 2px; }
.cn-bl { left: 0; top: 1030px; width: 3px; height: 21px; }
.cn-br { right: 0; top: 1050px; width: 23px; height: 3px; }
```
